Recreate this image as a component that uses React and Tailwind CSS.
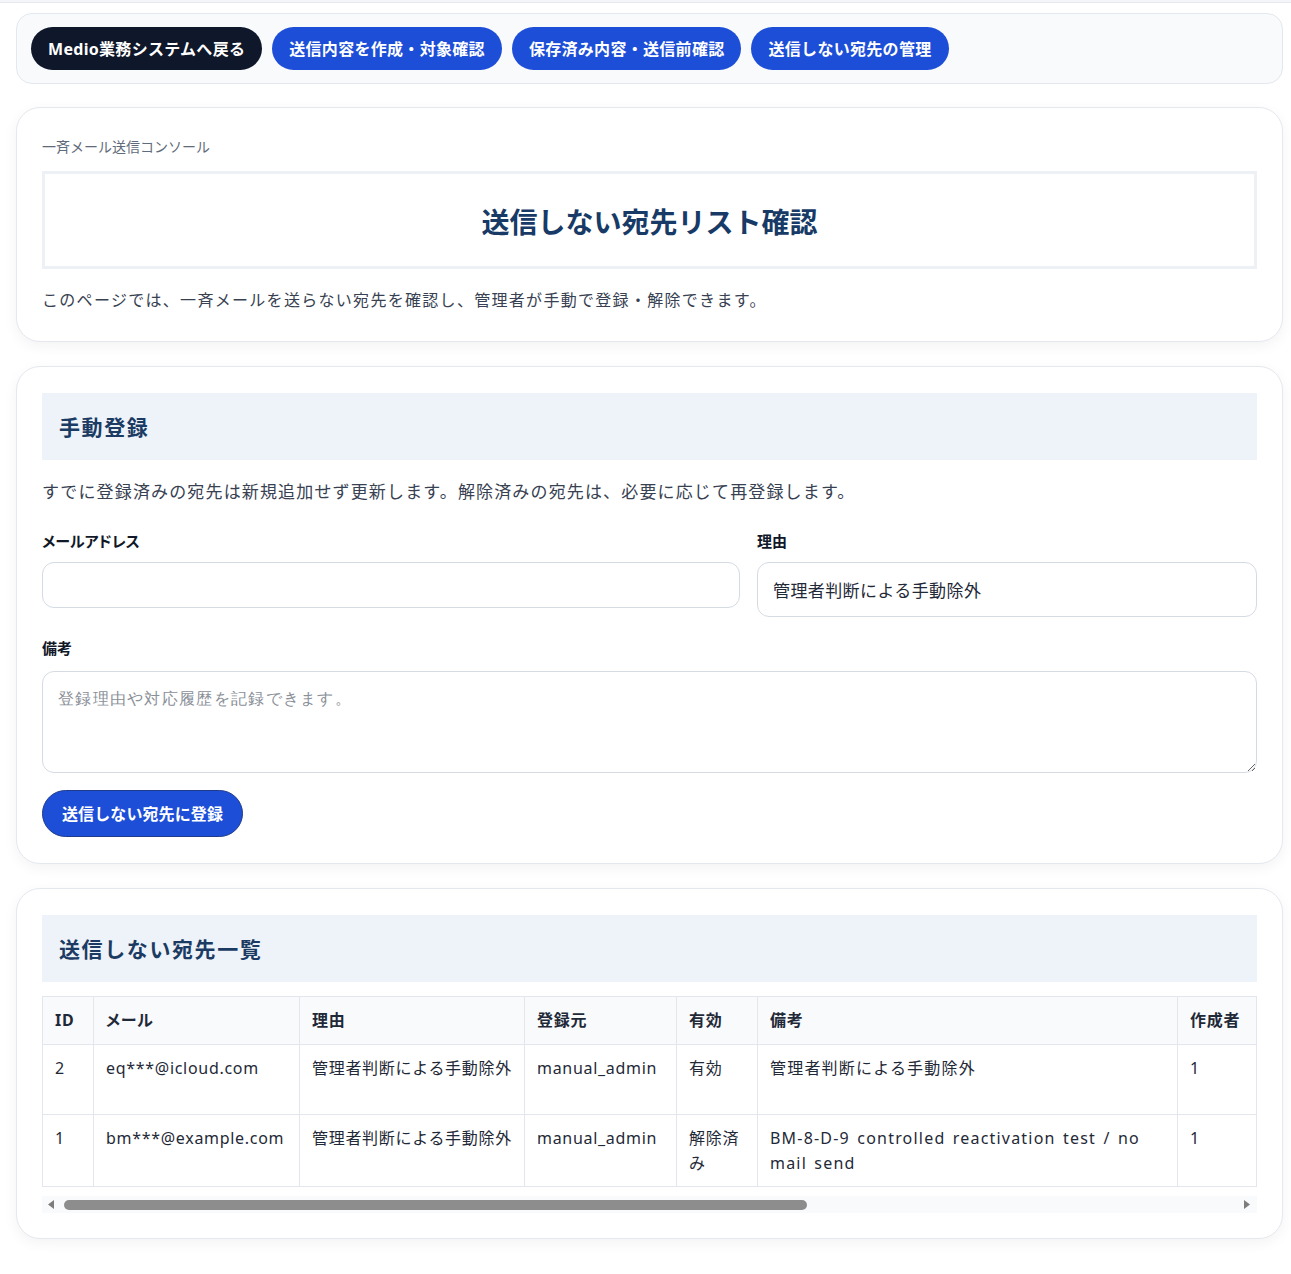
import React from "react";

const navButtons = [
  { label: "Medio業務システムへ戻る", dark: true },
  { label: "送信内容を作成・対象確認" },
  { label: "保存済み内容・送信前確認" },
  { label: "送信しない宛先の管理" },
];

const columns = [
  { key: "id", label: "ID", w: 51 },
  { key: "email", label: "メール", w: 206 },
  { key: "reason", label: "理由", w: 225 },
  { key: "source", label: "登録元", w: 152 },
  { key: "active", label: "有効", w: 81 },
  { key: "note", label: "備考", w: 420 },
  { key: "creator", label: "作成者", w: 79 },
];

const rows = [
  {
    id: "2",
    email: "eq***@icloud.com",
    reason: "管理者判断による手動除外",
    source: "manual_admin",
    active: "有効",
    note: "管理者判断による手動除外",
    creator: "1",
    h: "h-[70px]",
  },
  {
    id: "1",
    email: "bm***@example.com",
    reason: "管理者判断による手動除外",
    source: "manual_admin",
    active: "解除済み",
    note: "BM-8-D-9 controlled reactivation test / no mail send",
    creator: "1",
    h: "h-[72px]",
  },
];

function SectionHeader({ children }) {
  return (
    <div className="h-[67px] bg-[#eef3fa] flex items-center px-[17px]">
      <h2 className="text-[21px] leading-[30px] font-bold tracking-[1.6px] text-[#1b3b63]">
        {children}
      </h2>
    </div>
  );
}

function Arrow({ dir }) {
  return (
    <svg width="6" height="9" viewBox="0 0 6 9" className="shrink-0">
      {dir === "left" ? (
        <path d="M6 0 L0 4.5 L6 9 Z" fill="#7d7d7d" />
      ) : (
        <path d="M0 0 L6 4.5 L0 9 Z" fill="#7d7d7d" />
      )}
    </svg>
  );
}

export default function App() {
  return (
    <div className="min-h-screen bg-white font-['Noto_Sans','Noto_Sans_CJK_JP',sans-serif] text-[#1f2937] pb-[34px]">
      <div className="h-[3px] bg-[#f3f5f8] border-b border-[#e6eaf0]" />

      <nav className="mt-[10px] ml-4 mr-2 rounded-[16px] border border-[#e3e8ef] bg-[#f8fafc] px-[14px] py-[13px] flex gap-[10px]">
        {navButtons.map((b) => (
          <button
            key={b.label}
            className={`h-[43px] px-[17px] rounded-full text-[16px] font-bold tracking-[0.3px] text-white ${
              b.dark ? "bg-[#0f172a]" : "bg-[#1d4ed8]"
            }`}
          >
            {b.label}
          </button>
        ))}
      </nav>

      <section className="mt-[23px] ml-4 mr-2 rounded-[24px] border border-[#e5e8ee] bg-white px-[25px] pt-[26px] pb-[28px] shadow-[0_4px_14px_rgba(15,23,42,0.05)]">
        <p className="text-[14px] leading-[26px] text-[#5f6b7a]">一斉メール送信コンソール</p>
        <div className="mt-[11px] border-[3px] border-[#edf1f6] h-[98px] flex items-center justify-center pt-[4px]">
          <h1 className="text-[28px] leading-[40px] font-bold text-[#173a66]">
            送信しない宛先リスト確認
          </h1>
        </div>
        <p className="mt-[18px] text-[16px] leading-[26px] tracking-[1.3px] text-[#374151]">
          このページでは、一斉メールを送らない宛先を確認し、管理者が手動で登録・解除できます。
        </p>
      </section>

      <section className="mt-[24px] ml-4 mr-2 rounded-[24px] border border-[#e5e8ee] bg-white px-[25px] pt-[26px] pb-[26px] shadow-[0_4px_14px_rgba(15,23,42,0.05)]">
        <SectionHeader>手動登録</SectionHeader>
        <p className="mt-[18px] text-[17px] leading-[28px] tracking-[1.15px] text-[#374151]">
          すでに登録済みの宛先は新規追加せず更新します。解除済みの宛先は、必要に応じて再登録します。
        </p>
        <div className="mt-[23px] grid grid-cols-[698px_1fr] gap-x-[17px] items-start">
          <label className="flex flex-col">
            <span className="text-[15px] leading-[24px] font-bold text-[#111827] [font-feature-settings:'palt']">メールアドレス</span>
            <input
              type="email"
              className="mt-[9px] h-[46px] rounded-[12px] border border-[#d5dbe3] bg-white px-[15px] text-[16px] outline-none"
            />
          </label>
          <label className="flex flex-col">
            <span className="text-[15px] leading-[24px] font-bold text-[#111827] [font-feature-settings:'palt']">理由</span>
            <input
              type="text"
              defaultValue="管理者判断による手動除外"
              className="mt-[9px] h-[55px] rounded-[12px] border border-[#d5dbe3] bg-white px-[15px] text-[17px] tracking-[0.4px] text-[#1f2937] outline-none font-['Noto_Sans_CJK_JP',sans-serif]"
            />
          </label>
        </div>
        <label className="mt-[19px] flex flex-col">
          <span className="text-[15px] leading-[24px] font-bold text-[#111827] [font-feature-settings:'palt']">備考</span>
          <textarea
            placeholder="登録理由や対応履歴を記録できます。"
            className="mt-[11px] h-[102px] rounded-[12px] border border-[#d5dbe3] bg-white px-[15px] pt-[14px] pb-[12px] text-[16px] tracking-[1.3px] leading-[26px] outline-none font-serif placeholder:text-[#8a8f98]"
          />
        </label>
        <button className="mt-[17px] h-[47px] px-[19px] rounded-full bg-[#1d4ed8] text-white text-[16px] font-bold tracking-[0.1px] border border-[#1e3a8a]">
          送信しない宛先に登録
        </button>
      </section>

      <section className="mt-[24px] ml-4 mr-2 rounded-[24px] border border-[#e5e8ee] bg-white px-[25px] pt-[26px] pb-[25px] shadow-[0_4px_14px_rgba(15,23,42,0.05)]">
        <SectionHeader>送信しない宛先一覧</SectionHeader>
        <div className="mt-[14px] overflow-x-auto">
          <table className="table-fixed border-collapse w-full text-[16px] tracking-[0.7px] text-[#1f2937]">
            <colgroup>
              {columns.map((c) => (
                <col key={c.key} style={{ width: c.w }} />
              ))}
            </colgroup>
            <thead>
              <tr className="bg-[#f8fafc]">
                {columns.map((c) => (
                  <th
                    key={c.key}
                    className="border border-[#e3e7ed] px-[12px] py-[11px] text-left align-top font-bold leading-[25px] text-[#1f2937] whitespace-nowrap [font-feature-settings:'palt']"
                  >
                    {c.label}
                  </th>
                ))}
              </tr>
            </thead>
            <tbody>
              {rows.map((r) => (
                <tr key={r.id} className={r.h}>
                  {columns.map((c) => (
                    <td
                      key={c.key}
                      className={`border border-[#e3e7ed] px-[12px] pt-[11px] pb-[10px] align-top leading-[25px] break-words ${
                        c.key === "note" ? "tracking-[1.2px] [word-spacing:2px]" : ""
                      }`}
                    >
                      {r[c.key]}
                    </td>
                  ))}
                </tr>
              ))}
            </tbody>
          </table>
        </div>
        <div className="mt-[9px] h-[17px] bg-[#f8fafc] flex items-center pl-[6px] pr-[7px]">
          <Arrow dir="left" />
          <div className="ml-[10px] w-[743px] h-[10px] rounded-full bg-[#8d8d8d]" />
          <div className="flex-1" />
          <Arrow dir="right" />
        </div>
      </section>
    </div>
  );
}
